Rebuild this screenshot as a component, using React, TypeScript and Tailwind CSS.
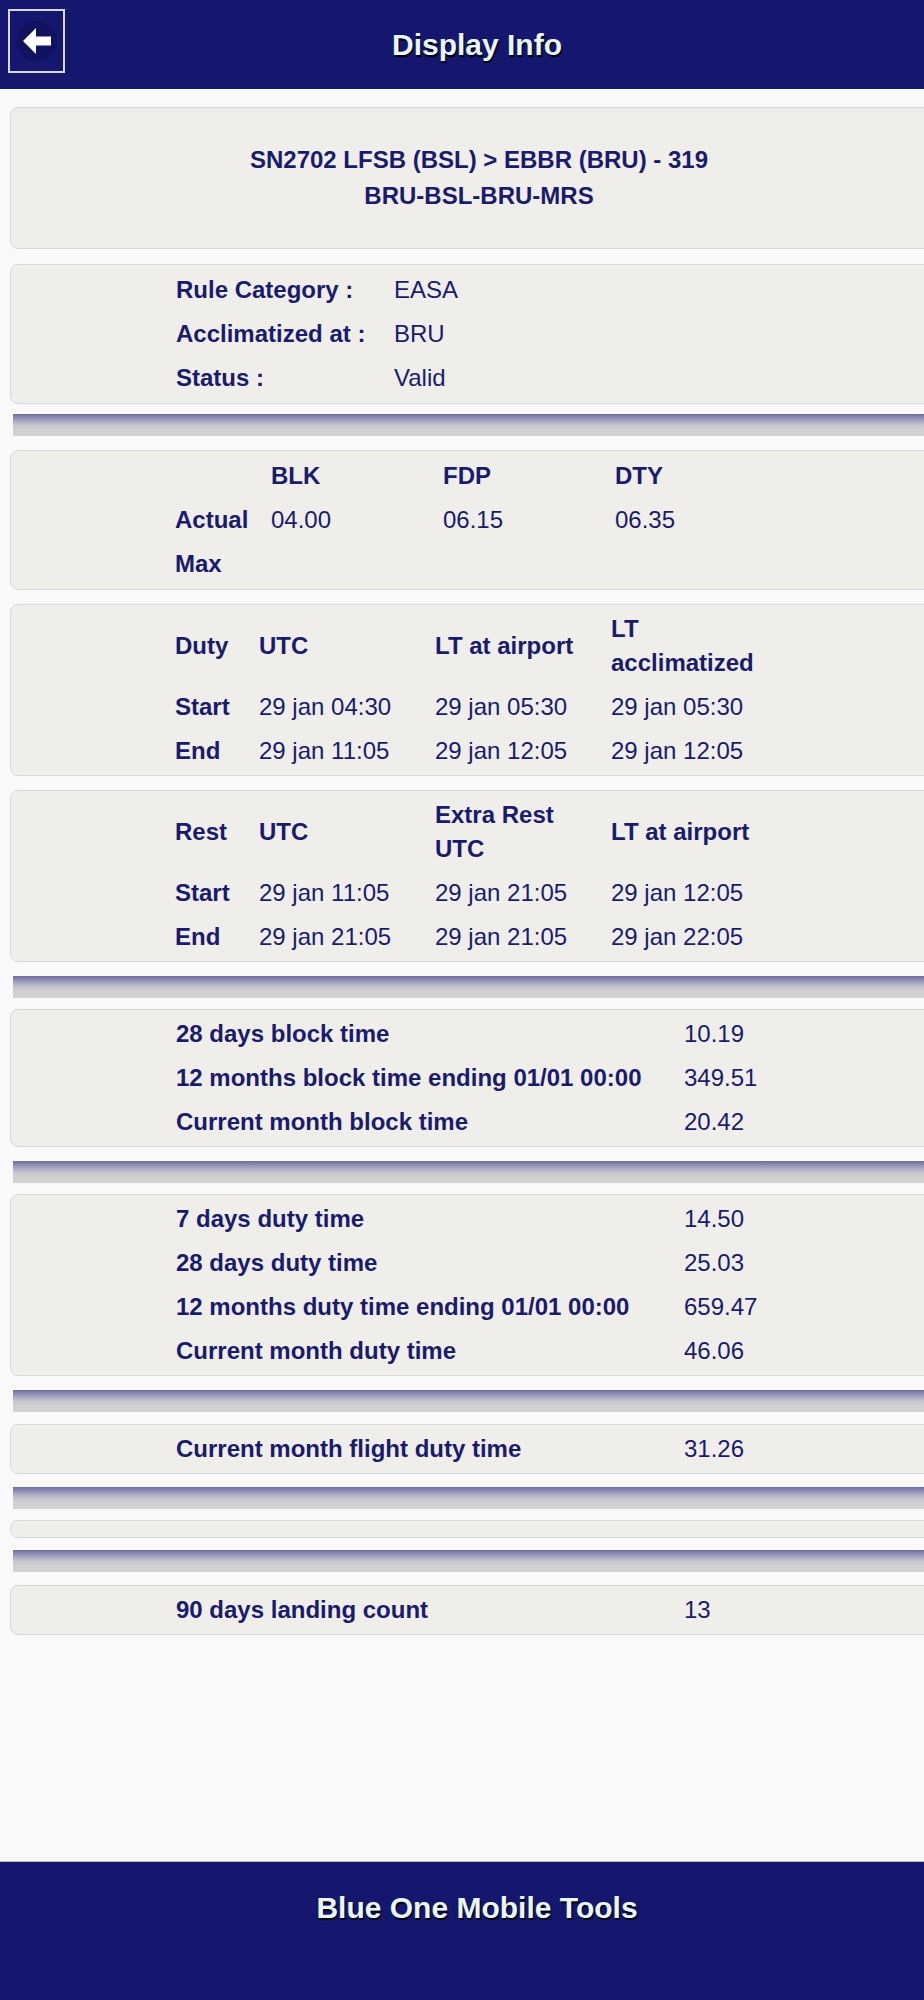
import React from 'react';

const font = { fontFamily: '"Liberation Sans", Arial, sans-serif' };

function Card({ children, className = '' }: { children?: React.ReactNode; className?: string }) {
  return (
    <div className={`ml-[10px] mr-[6px] rounded-[8px] border border-[#d9d9d6] bg-[#efeeeb] ${className}`}>
      {children}
    </div>
  );
}

function Bar({ className = '' }: { className?: string }) {
  return (
    <div
      className={`ml-[13px] h-[22px] bg-[linear-gradient(to_bottom,#6c6c9e_0%,#9c9cbc_25%,#c4c4cf_50%,#d0d0d0_70%,#d2d2d2_100%)] ${className}`}
    />
  );
}

// two column stat rows: label | value
function StatRows({ rows }: { rows: string[][] }) {
  return (
    <div className="grid grid-cols-[508px_auto] py-[2px] pl-[165px]">
      {rows.map(([label, value]) => (
        <React.Fragment key={label}>
          <div className="py-[5px] font-bold">{label}</div>
          <div className="py-[5px]">{value}</div>
        </React.Fragment>
      ))}
    </div>
  );
}

function TimeTable({ head, rows }: { head: React.ReactNode[]; rows: string[][] }) {
  return (
    <div className="grid grid-cols-[84px_176px_176px_180px] items-center py-[2px] pl-[164px]">
      {head.map((h, i) => (
        <div key={i} className="py-[5px] font-bold">{h}</div>
      ))}
      {rows.map((r) =>
        r.map((c, i) => (
          <div key={r[0] + i} className={`py-[5px] ${i === 0 ? 'font-bold' : ''}`}>{c}</div>
        ))
      )}
    </div>
  );
}

export default function App() {
  return (
    <div className="w-[924px] overflow-hidden bg-[#f9f9f9]" style={font}>
      <div className="flex min-h-[2000px] w-[954px] flex-col text-[24px] leading-[34px] text-[#1b1b6c]">
        {/* header */}
        <header className="grid h-[89px] shrink-0 grid-cols-[1fr_auto_1fr] bg-[#15166e]">
          <div className="flex items-start">
            <button className="ml-[8px] mt-[9px] flex h-[64px] w-[57px] items-center justify-center border-2 border-[#d8d8e0]">
              <span className="flex h-[40px] w-[40px] items-center justify-center rounded-full bg-[#101260]">
                <svg width="28" height="26" viewBox="0 0 28 26">
                  <path d="M0 13 L13 0 L13 8.5 L28 8.5 L28 17.5 L13 17.5 L13 26 Z" fill="#ffffff" />
                </svg>
              </span>
            </button>
          </div>
          <h1 className="flex items-center text-[30px] font-bold text-[#e8f6ff] [text-shadow:1px_2px_1px_#000]">
            Display Info
          </h1>
          <div />
        </header>

        <main className="flex-1">
          <Card className="mt-[18px] py-[34px] text-center font-bold leading-[36px]">
            <div>SN2702 LFSB (BSL) &gt; EBBR (BRU) - 319</div>
            <div>BRU-BSL-BRU-MRS</div>
          </Card>

          <Card className="mt-[15px]">
            <div className="grid grid-cols-[218px_auto] py-[3px] pl-[165px]">
              <div className="py-[5px] font-bold">Rule Category :</div>
              <div className="py-[5px]">EASA</div>
              <div className="py-[5px] font-bold">Acclimatized at :</div>
              <div className="py-[5px]">BRU</div>
              <div className="py-[5px] font-bold">Status :</div>
              <div className="py-[5px]">Valid</div>
            </div>
          </Card>

          <Bar className="mt-[10px]" />

          <Card className="mt-[14px]">
            <div className="grid grid-cols-[96px_172px_172px_auto] py-[3px] pl-[164px]">
              <div className="py-[5px]" />
              <div className="py-[5px] font-bold">BLK</div>
              <div className="py-[5px] font-bold">FDP</div>
              <div className="py-[5px] font-bold">DTY</div>
              <div className="py-[5px] font-bold">Actual</div>
              <div className="py-[5px]">04.00</div>
              <div className="py-[5px]">06.15</div>
              <div className="py-[5px]">06.35</div>
              <div className="py-[5px] font-bold">Max</div>
              <div className="py-[5px]" />
              <div className="py-[5px]" />
              <div className="py-[5px]" />
            </div>
          </Card>

          <Card className="mt-[14px]">
            <TimeTable
              head={['Duty', 'UTC', 'LT at airport', <>LT<br />acclimatized</>]}
              rows={[
                ['Start', '29 jan 04:30', '29 jan 05:30', '29 jan 05:30'],
                ['End', '29 jan 11:05', '29 jan 12:05', '29 jan 12:05'],
              ]}
            />
          </Card>

          <Card className="mt-[14px]">
            <TimeTable
              head={['Rest', 'UTC', <>Extra Rest<br />UTC</>, 'LT at airport']}
              rows={[
                ['Start', '29 jan 11:05', '29 jan 21:05', '29 jan 12:05'],
                ['End', '29 jan 21:05', '29 jan 21:05', '29 jan 22:05'],
              ]}
            />
          </Card>

          <Bar className="mt-[14px]" />

          <Card className="mt-[11px]">
            <StatRows
              rows={[
                ['28 days block time', '10.19'],
                ['12 months block time ending 01/01 00:00', '349.51'],
                ['Current month block time', '20.42'],
              ]}
            />
          </Card>

          <Bar className="mt-[14px]" />

          <Card className="mt-[11px]">
            <StatRows
              rows={[
                ['7 days duty time', '14.50'],
                ['28 days duty time', '25.03'],
                ['12 months duty time ending 01/01 00:00', '659.47'],
                ['Current month duty time', '46.06'],
              ]}
            />
          </Card>

          <Bar className="mt-[14px]" />

          <Card className="mt-[12px]">
            <StatRows rows={[['Current month flight duty time', '31.26']]} />
          </Card>

          <Bar className="mt-[13px]" />

          <Card className="mt-[11px] h-[18px]" />

          <Bar className="mt-[12px]" />

          <Card className="mt-[13px]">
            <StatRows rows={[['90 days landing count', '13']]} />
          </Card>
        </main>

        {/* footer */}
        <footer className="h-[139px] shrink-0 border-t border-[#bdbbb2] bg-[#15166e] pt-[28px] text-center text-[30px] font-bold leading-[36px] text-[#e8f6ff] [text-shadow:1px_2px_1px_#000]">
          Blue One Mobile Tools
        </footer>
      </div>
    </div>
  );
}
